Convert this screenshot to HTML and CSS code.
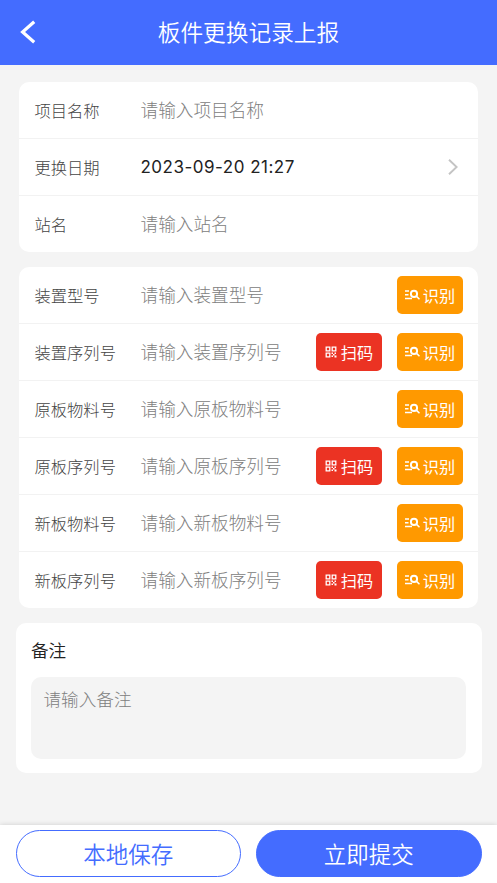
FILE: index.html
```html
<!DOCTYPE html>
<html lang="zh-CN">
<head>
<meta charset="utf-8">
<title>板件更换记录上报</title>
<link rel="stylesheet" href="styles.css">
</head>
<body>
<svg class="defs" width="0" height="0">
  <symbol id="scan" viewBox="0 0 12 12"><path fill="none" stroke="currentColor" stroke-width="1.3" d="M1.2 1.2h3.6v3.6H1.2zM7.2 1.2h3.6v3.6H7.2zM1.2 7.2h3.6v3.6H1.2z"/><path fill="currentColor" d="M6.5 6.5H8V8H6.5zM8 8h1.5v1.5H8zM6.5 9.5H8V11H6.5zM9.5 6.5H11V8H9.5zM9.5 9.5h2v2h-2z"/></symbol>
  <symbol id="find" viewBox="0 0 16 12"><path fill="none" stroke="currentColor" stroke-width="1.5" d="M1 2h4M1 5.7h3.5M1 9.5h7M12.3 7.1l3.2 3.2"/><circle cx="10" cy="4.9" r="3.1" fill="none" stroke="currentColor" stroke-width="1.9"/></symbol>
</svg>
<header class="header">
  <svg class="back" viewBox="0 0 16 24"><path d="M14.2 1.7 2.6 12l11.6 10.3"/></svg>
  <h1 class="title">板件更换记录上报</h1>
</header>
<main class="content">
  <section class="card">
    <div class="row"><span class="label">项目名称</span><span class="hint">请输入项目名称</span></div>
    <div class="row"><span class="label">更换日期</span><span class="hint date">2023-09-20 21:27</span><svg class="arrow" viewBox="0 0 10 16"><path d="M1 .8 8.6 8 1 15.2"/></svg></div>
    <div class="row"><span class="label">站名</span><span class="hint">请输入站名</span></div>
  </section>
  <section class="card">
    <div class="row"><span class="label">装置型号</span><span class="hint">请输入装置型号</span><button class="btn find"><svg><use href="#find"/></svg>识别</button></div>
    <div class="row"><span class="label">装置序列号</span><span class="hint">请输入装置序列号</span><button class="btn scan"><svg><use href="#scan"/></svg>扫码</button><button class="btn find"><svg><use href="#find"/></svg>识别</button></div>
    <div class="row"><span class="label">原板物料号</span><span class="hint">请输入原板物料号</span><button class="btn find"><svg><use href="#find"/></svg>识别</button></div>
    <div class="row"><span class="label">原板序列号</span><span class="hint">请输入原板序列号</span><button class="btn scan"><svg><use href="#scan"/></svg>扫码</button><button class="btn find"><svg><use href="#find"/></svg>识别</button></div>
    <div class="row"><span class="label">新板物料号</span><span class="hint">请输入新板物料号</span><button class="btn find"><svg><use href="#find"/></svg>识别</button></div>
    <div class="row"><span class="label">新板序列号</span><span class="hint">请输入新板序列号</span><button class="btn scan"><svg><use href="#scan"/></svg>扫码</button><button class="btn find"><svg><use href="#find"/></svg>识别</button></div>
  </section>
  <section class="card remark">
    <h2 class="remark-title">备注</h2>
    <div class="remark-input">请输入备注</div>
  </section>
</main>
<footer class="footer">
  <button class="action outline">本地保存</button>
  <button class="action primary">立即提交</button>
</footer>
</body>
</html>
```
FILE: styles.css
```css
* { box-sizing: border-box; }
body {
  margin: 0;
  height: 883px;
  display: flex;
  flex-direction: column;
  overflow: hidden;
  background: #f4f4f4;
  font-family: "Noto Sans CJK SC", sans-serif;
  font-weight: 300;
}
.defs { position: absolute; }
.header {
  height: 64.5px;
  flex: none;
  display: grid;
  grid-template-columns: 60px 1fr 60px;
  align-items: center;
  background: #446cff;
  color: #fff;
}
.back { width: 16px; height: 24px; margin-left: 20px; }
.back path { fill: none; stroke: #fff; stroke-width: 3.2; }
.title { margin: 0; font-size: 22.7px; font-weight: 350; line-height: 32px; text-align: center; white-space: nowrap; }
.content { flex: 1; padding: 17.5px 15.5px 0; }
.card {
  margin: 0 3.5px 15px;
  background: #fff;
  border-radius: 10px;
  overflow: hidden;
}
.row {
  height: 57px;
  display: flex;
  align-items: center;
  padding: 0 15.5px 0 15.5px;
  border-bottom: 1px solid #f2f2f2;
}
.row:last-child { height: 56px; border-bottom: 0; }
.label { width: 106px; padding-bottom: 1px; color: #444; font-size: 16.3px; }
.hint { flex: 1; padding-bottom: 2px; color: #808080; font-size: 17.65px; white-space: nowrap; }
.date { padding-bottom: 1px; color: #222; font-family: Inter, sans-serif; font-size: 17px; font-weight: 400; letter-spacing: .5px; }
.arrow { width: 10px; height: 16px; margin-right: 5px; }
.arrow path { fill: none; stroke: #c4c4c4; stroke-width: 1.9; }
.btn {
  width: 66px;
  height: 37.5px;
  margin-left: 15px;
  padding: 0 0 1px;
  display: flex;
  align-items: center;
  justify-content: center;
  border: 0;
  border-radius: 5px;
  color: #fff;
  font-family: inherit;
  font-size: 16.2px;
  font-weight: 400;
  line-height: 24px;
}
.btn.find { background: #ff9900; }
.btn.scan { background: #eb3323; }
.find svg { width: 16px; height: 12px; margin-right: 3px; }
.scan svg { width: 12px; height: 12px; margin: 1px 4px 0 1px; }
.remark { margin: 0; height: 149.5px; padding: 15px 15.5px 0; }
.remark-title { margin: 0; color: #222; font-size: 17.6px; font-weight: 350; line-height: 24px; }
.remark-input {
  height: 82px;
  margin-top: 14.5px;
  padding: 10px 12.5px;
  border-radius: 10px;
  background: #f4f4f4;
  color: #808080;
  font-size: 17.6px;
  line-height: 24px;
}
.footer {
  height: 58.5px;
  flex: none;
  display: flex;
  gap: 15px;
  padding: 5.5px 15.5px;
  background: #fff;
  box-shadow: 0 0 5px rgba(0, 0, 0, .16);
}
.action {
  flex: 1;
  height: 47px;
  padding: 0 0 2px;
  border: 1px solid #446cff;
  border-radius: 24px;
  font-family: inherit;
  font-size: 22.5px;
  font-weight: 350;
  line-height: 32px;
}
.outline { background: #fff; color: #446cff; }
.primary { background: #446cff; color: #fff; }
```
